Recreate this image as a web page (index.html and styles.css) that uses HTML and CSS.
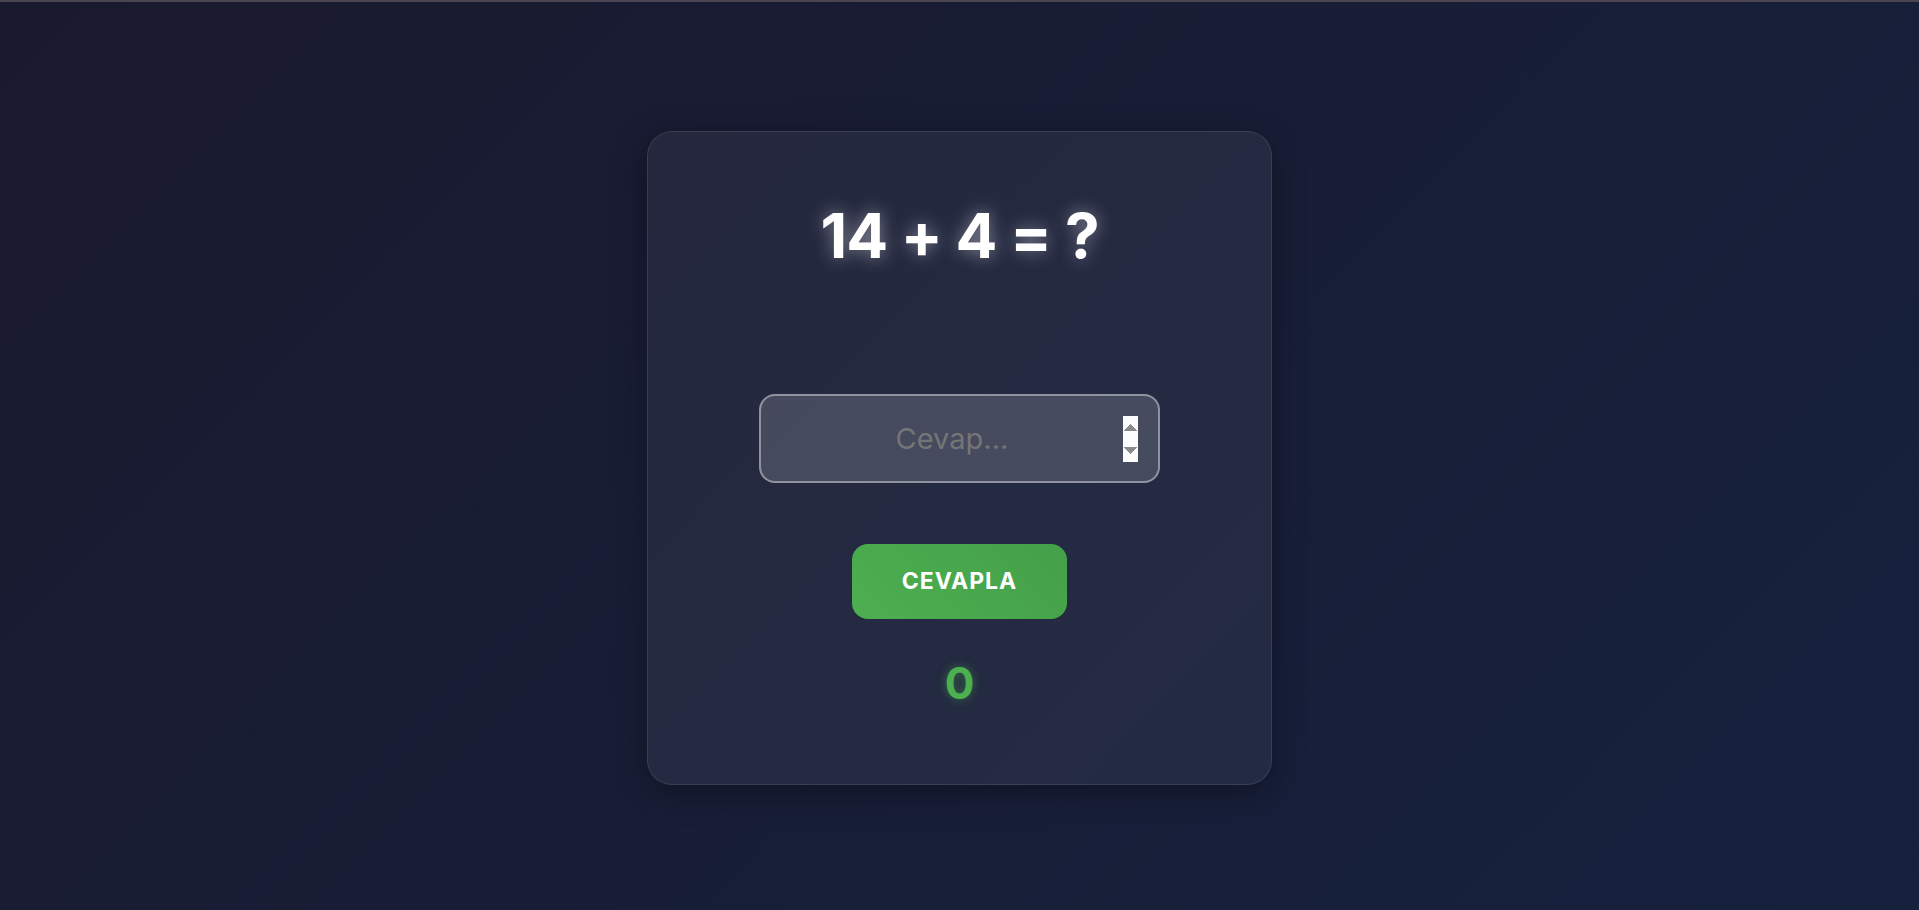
FILE: index.html
```html
<!DOCTYPE html>
<html lang="tr">
<head>
    <meta charset="UTF-8">
    <meta name="viewport" content="width=device-width, initial-scale=1.0">
    <title>Matematik Oyunu</title>
    <link rel="stylesheet" href="styles.css">
</head>
<body>
    <div class="top-bar"></div>
    <main class="wrapper">
        <div class="game-card">
            <h1 class="question">14 + 4 = ?</h1>
            <input type="number" class="answer-input" placeholder="Cevap..." autofocus>
            <button class="answer-btn">Cevapla</button>
            <div class="score">0</div>
        </div>
    </main>
</body>
</html>
```

FILE: styles.css
```css
* {
    margin: 0;
    padding: 0;
    box-sizing: border-box;
}
html, body {
    height: 100%;
}
body {
    font-family: Inter, "Noto Sans", Arial, sans-serif;
    background: linear-gradient(135deg, #1a1a2e, #16213e);
    color: white;
    overflow: hidden;
}
.top-bar {
    height: 2px;
    background: #4b4551;
}
.wrapper {
    display: flex;
    justify-content: center;
    padding-top: 129px;
}
.game-card {
    width: 625px;
    display: flex;
    flex-direction: column;
    align-items: center;
    padding: 66px 40px 75px;
    background: rgba(255, 255, 255, 0.055);
    border: 1px solid rgba(255, 255, 255, 0.1);
    border-radius: 25px;
    box-shadow: 0 8px 32px rgba(0, 0, 0, 0.35);
}
.question {
    font-size: 62px;
    font-weight: 700;
    line-height: 76px;
    letter-spacing: -1px;
    text-shadow: 0 0 18px rgba(255, 255, 255, 0.45);
}
.answer-input {
    margin-top: 120px;
    width: 401px;
    height: 89px;
    padding: 0 20px;
    font-family: inherit;
    font-size: 29px;
    text-align: center;
    color: white;
    caret-color: white;
    background: rgba(255, 255, 255, 0.155);
    border: 2px solid rgba(255, 255, 255, 0.4);
    border-radius: 16px;
    outline: none;
}
.answer-input::-webkit-inner-spin-button {
    width: 19px;
    height: 46px;
    opacity: 1;
}
.answer-btn {
    margin-top: 61px;
    padding: 20px 50px;
    font-family: inherit;
    font-size: 23px;
    font-weight: 700;
    line-height: 35px;
    letter-spacing: 1px;
    text-transform: uppercase;
    color: white;
    background: linear-gradient(45deg, #4caf50, #45a049);
    border: none;
    border-radius: 16px;
    cursor: pointer;
}
.score {
    margin-top: 38px;
    font-size: 44px;
    font-weight: 700;
    line-height: 52px;
    color: #4caf50;
    text-shadow: 0 0 10px rgba(76, 175, 80, 0.5);
}
```
